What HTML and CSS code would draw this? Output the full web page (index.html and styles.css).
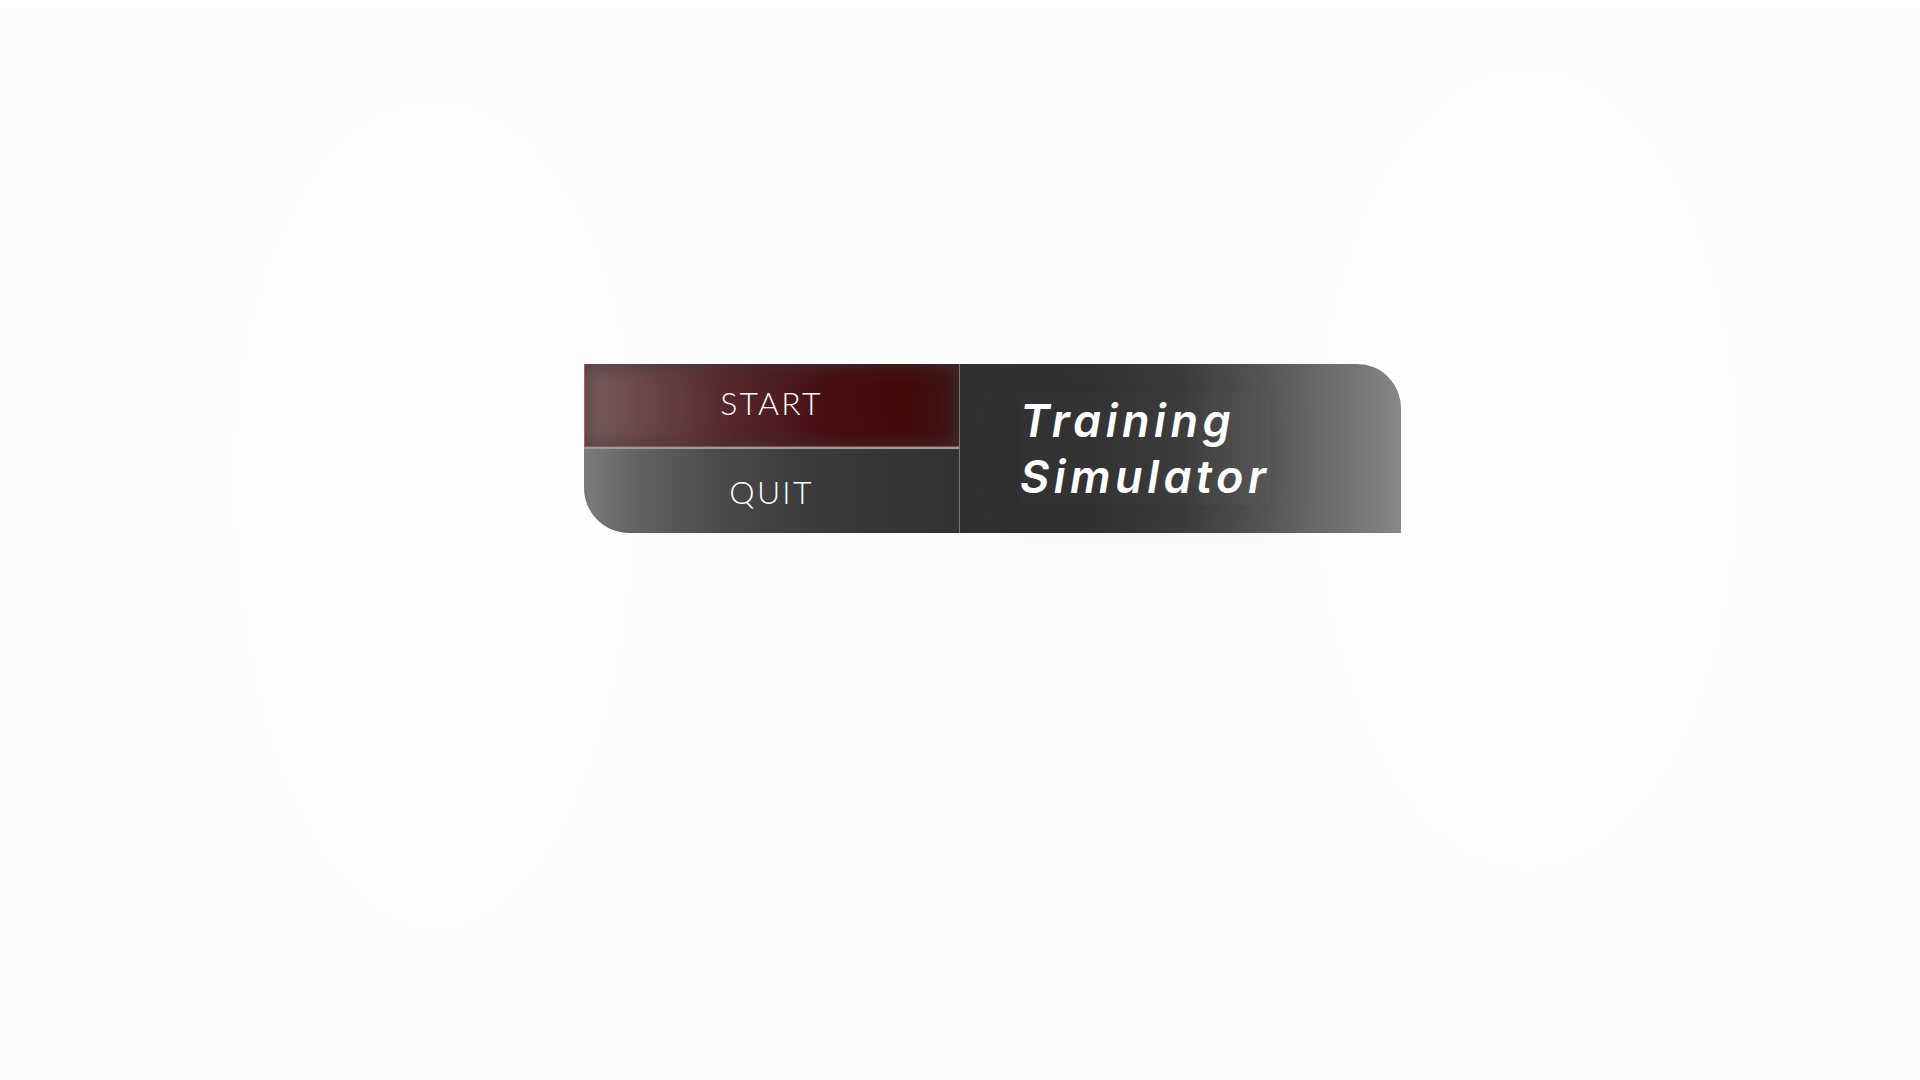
FILE: index.html
```html
<!DOCTYPE html>
<html lang="en">
<head>
<meta charset="utf-8">
<title>Training Simulator</title>
<link rel="stylesheet" href="styles.css">
</head>
<body>
<div class="blob blob-left"></div>
<div class="blob blob-right"></div>
<main class="stage">
  <div class="menu">
    <div class="buttons">
      <button class="btn btn-start">START</button>
      <div class="hdivider"></div>
      <button class="btn btn-quit">QUIT</button>
    </div>
    <div class="vdivider"></div>
    <div class="title-card">
      <h1 class="title">Training<br>Simulator</h1>
    </div>
  </div>
</main>
</body>
</html>
```
FILE: styles.css
```css
html, body {
  margin: 0;
  padding: 0;
}
body {
  width: 1920px;
  height: 1080px;
  overflow: hidden;
  background: linear-gradient(180deg, #ffffff 0px, #ffffff 9px, #fcfcfc 10px, #fcfcfc 100%);
  position: relative;
  font-family: "Lato", "Liberation Sans", sans-serif;
}
.blob {
  position: absolute;
  background: #fdfdfd;
  border-radius: 50%;
  z-index: 0;
}
.blob-left {
  left: 233px;
  top: 100px;
  width: 404px;
  height: 830px;
  border-radius: 50% 50% 50% 50% / 45% 45% 55% 55%;
}
.blob-right {
  left: 1316px;
  top: 67px;
  width: 423px;
  height: 803px;
}
.stage {
  position: relative;
  z-index: 1;
  padding: 364px 0 0 584px;
}
.menu {
  display: flex;
  width: 817px;
  height: 169px;
}
.buttons {
  width: 375px;
  display: flex;
  flex-direction: column;
  border-bottom-left-radius: 45px;
  overflow: hidden;
}
.btn {
  border: 0;
  margin: 0;
  padding: 0;
  display: flex;
  align-items: center;
  justify-content: center;
  color: #ffffff;
  font-family: "Lato", "Liberation Sans", sans-serif;
  font-weight: 300;
  font-size: 32px;
  letter-spacing: 2.2px;
  cursor: pointer;
}
.btn-start {
  height: 83px;
  padding-bottom: 6px;
  box-sizing: border-box;
  background:
    linear-gradient(90deg, #7a5d60 0%, #6a4447 18%, #55262a 40%, #470f12 65%, #430909 85%, #3d1414 100%);
  box-shadow:
    inset 1px 0 0 rgba(235, 80, 95, 0.75),
    inset 0 -1px 0 rgba(220, 90, 100, 0.5),
    inset 0 0 18px 3px rgba(62, 54, 54, 0.7);
}
.hdivider {
  height: 2px;
  background: #9c9c9c;
}
.btn-quit {
  height: 84px;
  background: linear-gradient(90deg, #7b7b7b 0%, #636363 14%, #4d4d4d 33%, #3e3e3e 55%, #363636 75%, #333333 100%);
}
.vdivider {
  width: 1px;
  background: #7a7a7a;
}
.title-card {
  flex: 1;
  border-top-right-radius: 44px;
  background: linear-gradient(90deg, #313131 0%, #333333 30%, #3c3c3c 50%, #555555 68%, #6e6e6e 85%, #878787 100%);
  padding: 29px 0 0 60px;
  box-sizing: border-box;
}
.title {
  display: inline-block;
  margin: 0;
  color: #ffffff;
  font-family: "Inter", "Liberation Sans", sans-serif;
  font-weight: 600;
  font-style: italic;
  font-size: 45px;
  line-height: 56px;
  letter-spacing: 4.5px;
  box-shadow: 0 6px 50px rgba(0, 0, 0, 0.09);
}
```
